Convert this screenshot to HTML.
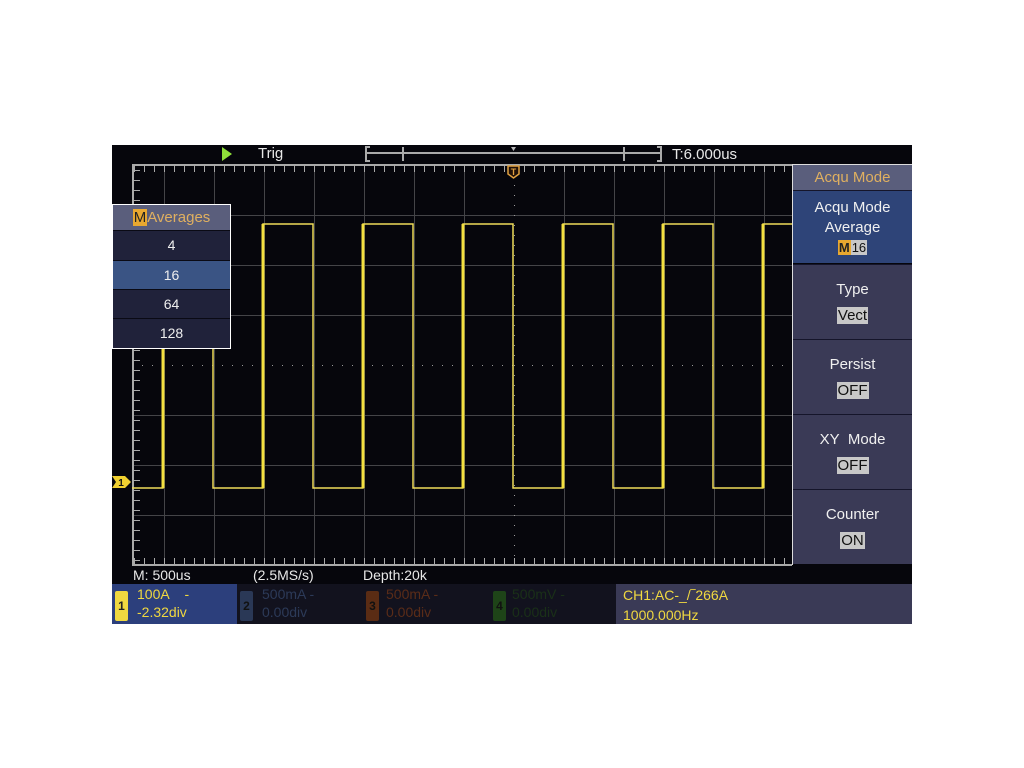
<!DOCTYPE html>
<html><head><meta charset="utf-8"><style>
body{margin:0;background:#fff;width:1024px;height:768px;position:relative;overflow:hidden;font-family:"Liberation Sans","DejaVu Sans",sans-serif}
.a{position:absolute}
.scr{left:112px;top:145px;width:800px;height:479px;background:#06060c}
.t{color:#e8e8e8;font-size:14px;white-space:nowrap}
.mi{left:793px;width:119px;background:#3a3a56;border-top:1px solid #15152a;text-align:center;color:#f0f0f0;font-size:15px}
.hl{background:#c8c8c8;color:#111;padding:0 1px}
.pr{left:113px;width:117px;text-align:center;color:#eee;font-size:14px;background:#20223a;border-top:1px solid #0a0a14}
</style></head><body>
<div class="a scr"></div>
<svg class="a" style="left:0;top:0" width="1024" height="768">
<g stroke="#444448" stroke-width="1">
<line x1="164.5" y1="165" x2="164.5" y2="565"/><line x1="214.5" y1="165" x2="214.5" y2="565"/><line x1="264.5" y1="165" x2="264.5" y2="565"/><line x1="314.5" y1="165" x2="314.5" y2="565"/><line x1="364.5" y1="165" x2="364.5" y2="565"/><line x1="414.5" y1="165" x2="414.5" y2="565"/><line x1="464.5" y1="165" x2="464.5" y2="565"/><line x1="564.5" y1="165" x2="564.5" y2="565"/><line x1="614.5" y1="165" x2="614.5" y2="565"/><line x1="664.5" y1="165" x2="664.5" y2="565"/><line x1="714.5" y1="165" x2="714.5" y2="565"/><line x1="764.5" y1="165" x2="764.5" y2="565"/>
<line x1="132" y1="215.5" x2="792" y2="215.5"/><line x1="132" y1="265.5" x2="792" y2="265.5"/><line x1="132" y1="315.5" x2="792" y2="315.5"/><line x1="132" y1="415.5" x2="792" y2="415.5"/><line x1="132" y1="465.5" x2="792" y2="465.5"/><line x1="132" y1="515.5" x2="792" y2="515.5"/>
</g>
<line x1="132" y1="365.5" x2="792" y2="365.5" stroke="#9a9a9a" stroke-dasharray="1 9"/>
<line x1="514.5" y1="175" x2="514.5" y2="565" stroke="#9a9a9a" stroke-dasharray="1 9"/>
<g stroke="#aaa" stroke-width="2"><line x1="132" y1="165" x2="792" y2="165"/><line x1="132" y1="565" x2="792" y2="565"/><line x1="133" y1="165" x2="133" y2="565"/></g>
<line x1="132" y1="169" x2="792" y2="169" stroke="#aaa" stroke-width="6" stroke-dasharray="1 9" stroke-dashoffset="-2"/>
<line x1="132" y1="561" x2="792" y2="561" stroke="#aaa" stroke-width="6" stroke-dasharray="1 9" stroke-dashoffset="-2"/>
<line x1="137" y1="165" x2="137" y2="565" stroke="#aaa" stroke-width="6" stroke-dasharray="1 9" stroke-dashoffset="-5"/>
<path d="M132 488H163V224H213V488H263V224H313V488H363V224H413V488H463V224H513V488H563V224H613V488H663V224H713V488H763V224H792" fill="none" stroke="#eedc5a" stroke-width="1.5"/>
<g stroke="#f4e040" stroke-width="3"><line x1="163" y1="224" x2="163" y2="488"/><line x1="263" y1="224" x2="263" y2="488"/><line x1="363" y1="224" x2="363" y2="488"/><line x1="463" y1="224" x2="463" y2="488"/><line x1="563" y1="224" x2="563" y2="488"/><line x1="663" y1="224" x2="663" y2="488"/><line x1="763" y1="224" x2="763" y2="488"/></g>
<polygon points="222,147 232,154 222,161" fill="#8fe03a"/>
<g stroke="#aaa" stroke-width="2" fill="none"><path d="M370 147H366V161H370"/><path d="M657 147H661V161H657"/><line x1="366" y1="153" x2="661" y2="153"/><line x1="403" y1="147" x2="403" y2="161"/><line x1="624" y1="147" x2="624" y2="161"/></g>
<polygon points="511,147 516,147 513.5,151" fill="#bbb"/>
<path d="M508 166H519V174L513.5 178L508 174Z" fill="#201008" stroke="#e0a040" stroke-width="1.5"/>
<text x="513.5" y="175" font-size="9" font-weight="bold" fill="#e0a040" text-anchor="middle" font-family="Liberation Sans">T</text>
<path d="M112 476H125L131 482L125 488H112L116 482Z" fill="#f0d030"/>
<text x="121" y="486" font-size="10" font-weight="bold" fill="#111" text-anchor="middle" font-family="Liberation Sans">1</text>
</svg>
<div class="a t" style="left:258px;top:145px;font-size:15px">Trig</div>
<div class="a t" style="left:672px;top:146px;font-size:15px">T:6.000us</div>
<div class="a" style="left:112px;top:204px;width:119px;height:145px;background:#fff"></div>
<div class="a" style="left:113px;top:205px;width:117px;height:25px;background:#5a5e7c;color:#e0b060;font-size:15px;text-align:center;line-height:25px"><span style="background:#e8a830;color:#222;padding:0 1px">M</span>Averages</div>
<div class="a pr" style="top:230px;height:29px;line-height:29px">4</div>
<div class="a pr" style="top:260px;height:28px;line-height:28px;background:#3a5484">16</div>
<div class="a pr" style="top:289px;height:29px;line-height:29px">64</div>
<div class="a pr" style="top:318px;height:29px;line-height:29px">128</div>
<div class="a" style="left:792px;top:164px;width:1px;height:401px;background:#ddd"></div>
<div class="a" style="left:793px;top:164px;width:119px;height:1px;background:#ddd"></div>
<div class="a" style="left:793px;top:165px;width:119px;height:25px;background:#5a5e7c;color:#e0b060;font-size:15px;text-align:center;line-height:25px">Acqu Mode</div>
<div class="a mi" style="top:190px;height:73px;background:#2e4478;line-height:20px;padding-top:7px;box-sizing:border-box">Acqu Mode<br>Average<br><span style="background:#e8a830;color:#222;font-weight:bold;font-size:13px;padding:0 1px">M</span><span class="hl" style="font-size:13px">16</span></div>
<div class="a mi" style="top:264px;height:75px;line-height:26px;padding-top:12px;box-sizing:border-box">Type<br><span class="hl">Vect</span></div>
<div class="a mi" style="top:339px;height:75px;line-height:26px;padding-top:12px;box-sizing:border-box">Persist<br><span class="hl">OFF</span></div>
<div class="a mi" style="top:414px;height:75px;line-height:26px;padding-top:12px;box-sizing:border-box">XY&nbsp; Mode<br><span class="hl">OFF</span></div>
<div class="a mi" style="top:489px;height:75px;line-height:26px;padding-top:12px;box-sizing:border-box">Counter<br><span class="hl">ON</span></div>
<div class="a t" style="left:133px;top:567px">M: 500us</div>
<div class="a t" style="left:253px;top:567px">(2.5MS/s)</div>
<div class="a t" style="left:363px;top:567px">Depth:20k</div>
<div class="a" style="left:112px;top:584px;width:800px;height:40px;background:#12121e"></div>
<div class="a" style="left:112px;top:584px;width:125px;height:40px;background:#2c3f7c"></div>
<div class="a" style="left:115px;top:591px;width:13px;height:30px;background:#f0d840;border-radius:2px;font-size:12px;font-weight:bold;color:#222;text-align:center;line-height:30px">1</div>
<div class="a" style="left:137px;top:585px;color:#f0d840;font-size:14px;line-height:18px;white-space:pre">100A    -
-2.32div</div>
<div class="a" style="left:240px;top:591px;width:13px;height:30px;background:#2a3856;border-radius:2px;font-size:12px;font-weight:bold;color:#111;text-align:center;line-height:30px">2</div>
<div class="a" style="left:262px;top:585px;color:#2c3a58;font-size:14px;line-height:18px;white-space:pre">500mA -
0.00div</div>
<div class="a" style="left:366px;top:591px;width:13px;height:30px;background:#5a2c14;border-radius:2px;font-size:12px;font-weight:bold;color:#111;text-align:center;line-height:30px">3</div>
<div class="a" style="left:386px;top:585px;color:#5a2c18;font-size:14px;line-height:18px;white-space:pre">500mA -
0.00div</div>
<div class="a" style="left:493px;top:591px;width:13px;height:30px;background:#1e4418;border-radius:2px;font-size:12px;font-weight:bold;color:#111;text-align:center;line-height:30px">4</div>
<div class="a" style="left:512px;top:585px;color:#1a3018;font-size:14px;line-height:18px;white-space:pre">500mV -
0.00div</div>
<div class="a" style="left:616px;top:584px;width:296px;height:40px;background:#3a3a56"></div>
<div class="a" style="left:623px;top:585px;color:#f0d840;font-size:14px;line-height:20px;white-space:pre">CH1:AC-_/‾266A
1000.000Hz</div>
</body></html>
